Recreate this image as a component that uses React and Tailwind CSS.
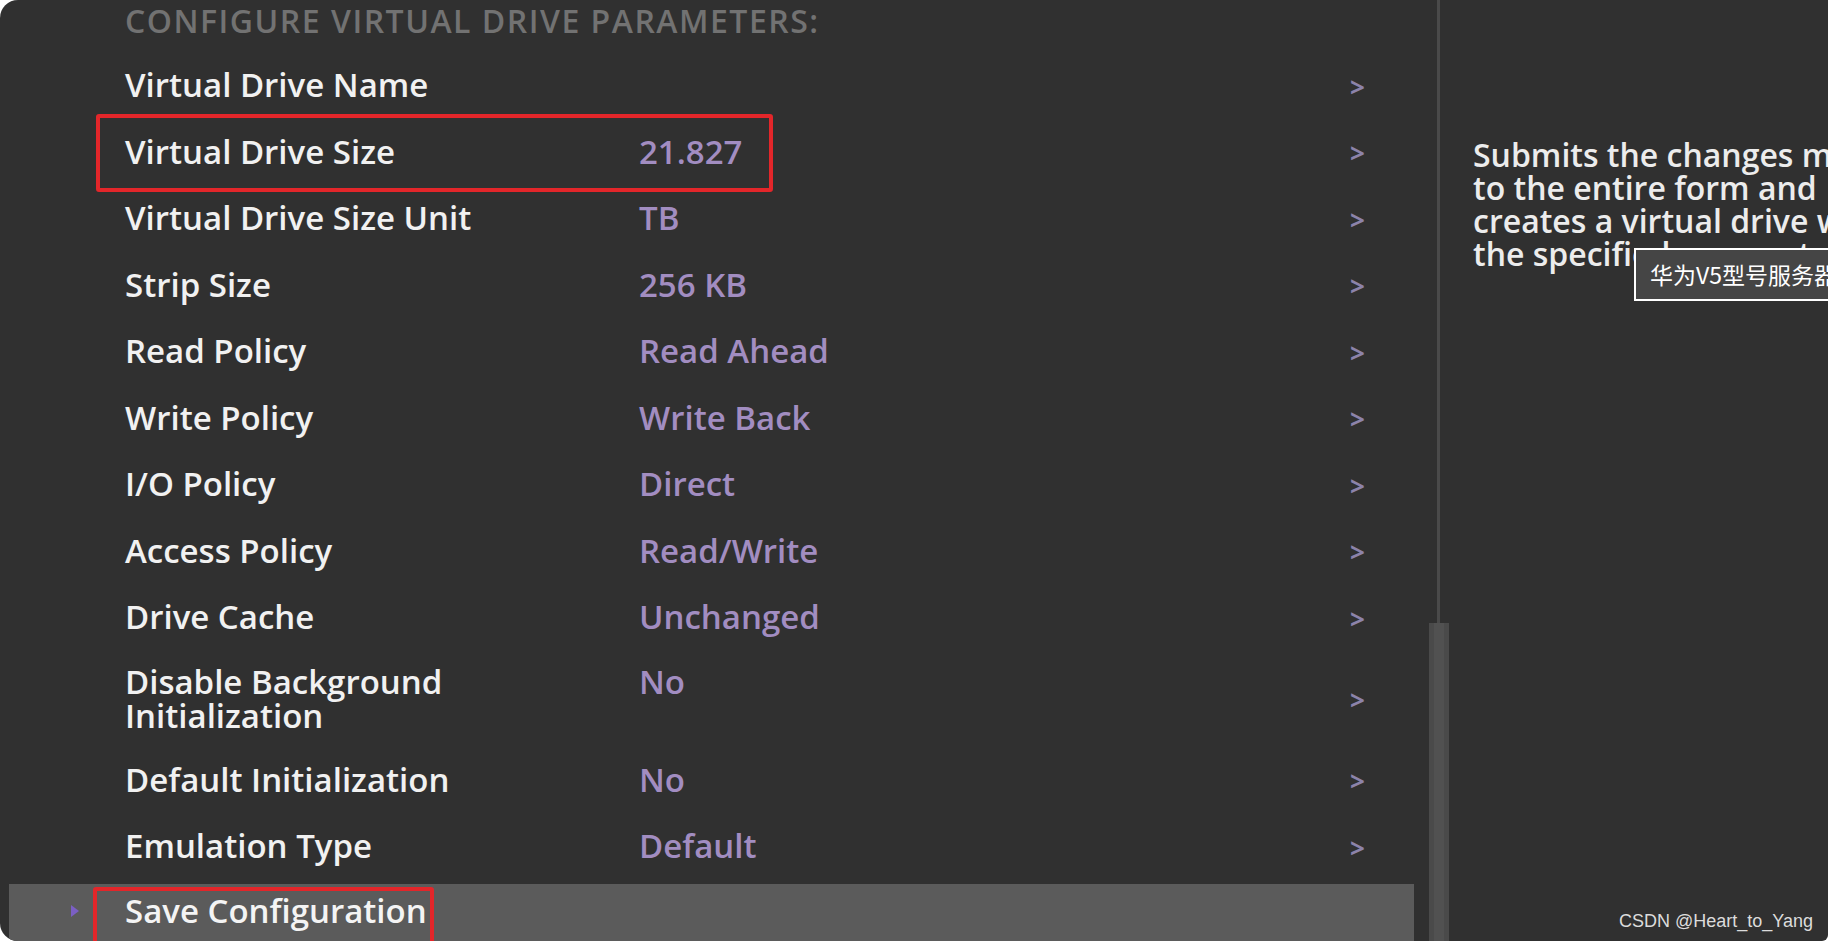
import React from "react";

const rows = [
  { label: ["Virtual Drive Name"], value: "" },
  { label: ["Virtual Drive Size"], value: "21.827" },
  { label: ["Virtual Drive Size Unit"], value: "TB" },
  { label: ["Strip Size"], value: "256 KB" },
  { label: ["Read Policy"], value: "Read Ahead" },
  { label: ["Write Policy"], value: "Write Back" },
  { label: ["I/O Policy"], value: "Direct" },
  { label: ["Access Policy"], value: "Read/Write" },
  { label: ["Drive Cache"], value: "Unchanged" },
  { label: ["Disable Background", "Initialization"], value: "No" },
  { label: ["Default Initialization"], value: "No" },
  { label: ["Emulation Type"], value: "Default" },
];

const helpLines = [
  "Submits the changes made",
  "to the entire form and",
  "creates a virtual drive with",
  "the specified parameters.",
];

function Row({ label, value }) {
  const tall = label.length > 1;
  return (
    <div className={`flex items-center pl-[125px] pr-[63px] ${tall ? "h-[96px]" : "h-[66.5px]"}`}>
      <div className="w-[514px] text-[#f1f1f1] text-[33px] leading-[34px] font-semibold">
        {label.map((l) => (
          <div key={l}>{l}</div>
        ))}
      </div>
      <div className={`flex-1 text-[#a28dc1] text-[33px] leading-[34px] font-semibold ${tall ? "-mt-[34px]" : ""}`}>
        {value}
      </div>
      <div className="w-[16px] pt-[3px] text-[#8c83aa] text-[26px] leading-[26px] font-bold">&gt;</div>
    </div>
  );
}

export default function App() {
  return (
    <div className="w-[1828px] h-[941px] bg-white overflow-hidden" style={{ fontFamily: '"Open Sans", "Noto Sans", sans-serif' }}>
      <div className="relative w-full h-full bg-[#303030] rounded-tl-[18px] rounded-bl-[18px] rounded-br-[6px] overflow-hidden flex">
        {/* left form */}
        <div className="w-[1429px] flex flex-col">
          <div className="h-[52px] pl-[125px] text-[#727272] text-[32px] leading-[42px] font-semibold tracking-[1.5px]">
            CONFIGURE VIRTUAL DRIVE PARAMETERS:
          </div>
          {rows.map((r) => (
            <Row key={r.label[0]} {...r} />
          ))}
          <div className="mt-[4px] ml-[9px] w-[1405px] flex-1 bg-[#5b5b5b] flex items-center pl-[61px] pb-[2px]">
            <svg width="10" height="14" viewBox="0 0 10 14" className="mr-[45px]">
              <path d="M1 1 L9 7 L1 13 Z" fill="#7b5fc4" />
            </svg>
            <span className="text-[#f4f4f4] text-[33px] leading-[34px] font-semibold">Save Configuration</span>
          </div>
        </div>

        {/* scrollbar */}
        <div className="w-[19px] flex flex-col items-center">
          <div className="w-[3px] h-[623px] bg-[#4a4a4a]" />
          <div className="w-[20px] flex-1 bg-[#515151] border-x-[5px] border-[#4a4a4a]" />
        </div>

        {/* help panel */}
        <div className="flex-1 pl-[25px] pt-[138px] overflow-hidden">
          {helpLines.map((l) => (
            <div key={l} className="whitespace-nowrap text-[#ececec] text-[32px] leading-[33px] font-semibold">
              {l}
            </div>
          ))}
        </div>

        {/* annotations */}
        <div className="absolute left-[96px] top-[114px] w-[677px] h-[78px] border-[4px] border-[#e3262a] rounded-[3px]" />
        <div className="absolute left-[93px] top-[887px] w-[341px] h-[60px] border-[4px] border-[#e3262a] rounded-[3px]" />

        <div className="absolute left-[1634px] top-[248px] h-[53px] w-[260px] border-2 border-white bg-[#454545] pl-[14px] flex items-center whitespace-nowrap">
          <span className="text-white text-[23px]" style={{ fontFamily: '"Noto Sans CJK SC", "Noto Sans", sans-serif' }}>
            华为V5型号服务器RAID配置
          </span>
        </div>

        <div className="absolute right-[15px] bottom-[10px] text-[#dcdcdc] text-[18px] leading-[20px]" style={{ fontFamily: '"Liberation Sans", Arial, sans-serif' }}>
          CSDN @Heart_to_Yang
        </div>
      </div>
    </div>
  );
}
